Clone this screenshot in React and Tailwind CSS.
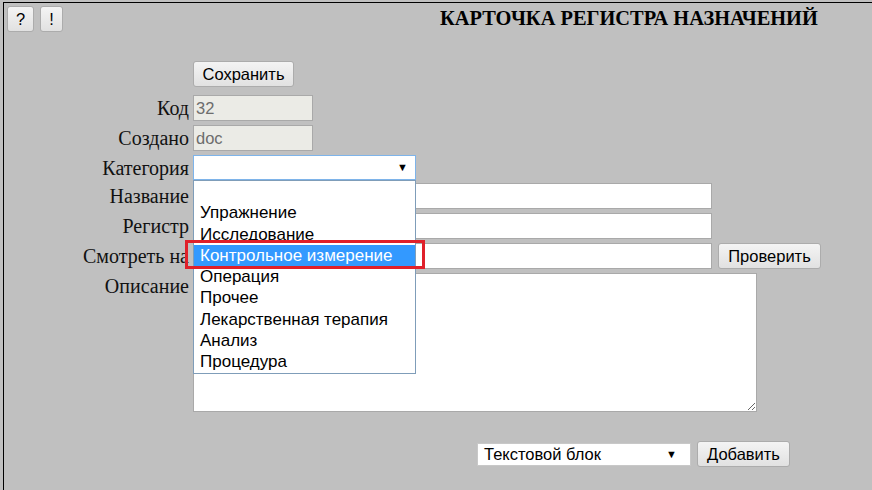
import React from 'react';

const serif = "font-['Liberation_Serif','Times_New_Roman',serif]";
const sans = "font-['Liberation_Sans',Arial,sans-serif]";

const categories = [
    '',
    'Упражнение',
    'Исследование',
    'Контрольное измерение',
    'Операция',
    'Прочее',
    'Лекарственная терапия',
    'Анализ',
    'Процедура',
];

const Btn = ({ className = '', children }) => (
    <button
        className={`${sans} flex items-center justify-center rounded-[3px] border border-[#acacac] bg-linear-to-b from-[#f4f4f4] to-[#e1e1e1] text-[16.5px] text-black leading-none ${className}`}
    >
        {children}
    </button>
);

const Row = ({ label, className = '', children }) => (
    <div className={`flex h-[26px] items-center gap-[4px] ${className}`}>
        <div className={`${serif} w-[185px] shrink-0 text-right text-[20px] leading-[26px] text-[#111] whitespace-nowrap`}>
            {label}
        </div>
        {children}
    </div>
);

const TextBox = ({ className = '', value = '', disabled = false }) => (
    <div
        className={`${sans} flex h-[26px] items-center border border-[#a9a9a9] px-[2px] text-[16.5px] ${disabled ? 'bg-[#ebebe6] text-[#6d6d6d]' : 'bg-white text-black'} ${className}`}
    >
        {value}
    </div>
);

export default function App() {
    return (
        <div className="h-[490px] w-[872px] overflow-hidden bg-[#c0c0c0] pl-[3px] pt-[2px]">
            <div className="relative h-full border-l border-t border-black">
                {/* шапка */}
                <div className="flex h-[29px] items-start">
                    <Btn className="ml-[3px] mt-[3px] h-[26px] w-[27px]">?</Btn>
                    <Btn className="ml-[6px] mt-[3px] h-[26px] w-[23px]">!</Btn>
                    <h1 className={`${serif} ml-[377px] mt-[4px] text-[20.4px] font-bold leading-[22px] text-black whitespace-nowrap`}>
                        КАРТОЧКА РЕГИСТРА НАЗНАЧЕНИЙ
                    </h1>
                </div>

                <div className="mt-[29px] flex flex-col">
                    <div className="pl-[189px]">
                        <Btn className="h-[26px] w-[101px]">Сохранить</Btn>
                    </div>

                    <Row label="Код" className="mt-[8px]">
                        <TextBox className="w-[120px]" value="32" disabled />
                    </Row>
                    <Row label="Создано" className="mt-[4px]">
                        <TextBox className="w-[120px]" value="doc" disabled />
                    </Row>
                    <Row label="Категория" className="mt-[4px] !h-[25px]">
                        <div className={`${sans} flex h-[25px] w-[223px] items-center justify-end border border-[#7eb4ea] bg-white pr-[7px] text-[11px]`}>
                            ▼
                        </div>
                    </Row>
                    <Row label="Название" className="mt-[3px]">
                        <TextBox className="w-[519px]" />
                    </Row>
                    <Row label="Регистр" className="mt-[4px]">
                        <TextBox className="w-[519px]" />
                    </Row>
                    <Row label="Смотреть на" className="mt-[4px]">
                        <TextBox className="w-[519px]" />
                        <Btn className="ml-[2px] h-[26px] w-[103px]">Проверить</Btn>
                    </Row>
                    <div className="mt-[4px] flex items-start gap-[4px]">
                        <div className={`${serif} w-[185px] shrink-0 text-right text-[20px] leading-[26px] text-[#111]`}>
                            Описание
                        </div>
                        <textarea className="block h-[139px] w-[564px] resize border border-[#a9a9a9] bg-white" />
                    </div>

                    <div className="mt-[29px] flex h-[26px] items-center justify-end pr-[82px]">
                        <div className={`${sans} flex h-[23px] w-[214px] items-center justify-between border border-[#c8c8c8] bg-white pl-[6px] pr-[13px] text-[16.5px] text-black`}>
                            <span>Текстовой блок</span>
                            <span className="text-[11px]">▼</span>
                        </div>
                        <Btn className="ml-[6px] h-[26px] w-[93px]">Добавить</Btn>
                    </div>
                </div>

                {/* раскрытый список категорий */}
                <div className={`${sans} absolute left-[189px] top-[177px] w-[223px] border border-[#7f9db9] bg-white text-[17px] text-black`}>
                    {categories.map((c, i) => (
                        <div
                            key={i}
                            className={`h-[21.3px] pl-[6px] leading-[21.3px] whitespace-nowrap ${i === 3 ? 'bg-[#3399ff] text-white' : ''}`}
                        >
                            {c}
                        </div>
                    ))}
                </div>

                {/* красная рамка */}
                <div className="absolute left-[181px] top-[237px] h-[29px] w-[240px] border-[3px] border-[#e0202a]" />
            </div>
        </div>
    );
}
